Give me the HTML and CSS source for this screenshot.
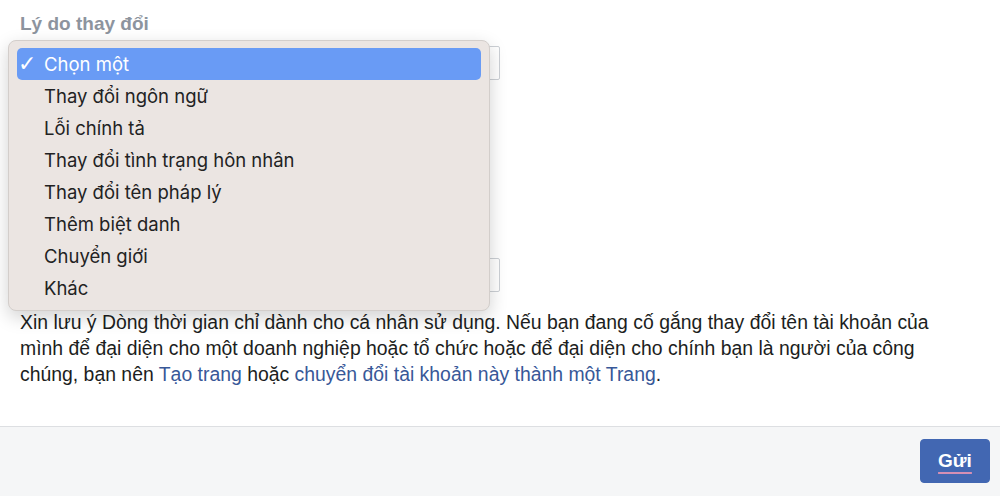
FILE: index.html
```html
<!DOCTYPE html>
<html lang="vi">
<head>
    <meta charset="UTF-8">
    <meta name="viewport" content="width=device-width, initial-scale=1.0">
    <title>Lý do thay đổi</title>
    <link rel="stylesheet" href="styles.css">
</head>
<body>
    <div class="page">
        <div class="content">
            <div class="field-label">Lý do thay đổi</div>
            <div class="select-box">
                <span class="select-text">Chọn một</span>
                <span class="select-arrow">⌄</span>
            </div>

            <div class="hidden-fields"></div>

            <div class="text-input"></div>

            <p class="note">
                Xin lưu ý Dòng thời gian chỉ dành cho cá nhân sử dụng. Nếu bạn đang cố gắng thay đổi tên tài khoản của
                mình để đại diện cho một doanh nghiệp hoặc tổ chức hoặc để đại diện cho chính bạn là người của công
                chúng, bạn nên <a href="#">Tạo trang</a> hoặc <a href="#">chuyển đổi tài khoản này thành một Trang</a>.
            </p>

            <!-- native select popup, drawn open -->
            <ul class="select-menu">
                <li class="menu-item selected"><span class="check">✓</span>Chọn một</li>
                <li class="menu-item">Thay đổi ngôn ngữ</li>
                <li class="menu-item">Lỗi chính tả</li>
                <li class="menu-item">Thay đổi tình trạng hôn nhân</li>
                <li class="menu-item">Thay đổi tên pháp lý</li>
                <li class="menu-item">Thêm biệt danh</li>
                <li class="menu-item">Chuyển giới</li>
                <li class="menu-item">Khác</li>
            </ul>
        </div>

        <div class="footer">
            <button class="submit-btn"><span>Gửi</span></button>
        </div>
    </div>
</body>
</html>
```

FILE: styles.css
```css
* {
    margin: 0;
    padding: 0;
    box-sizing: border-box;
}

body {
    font-family: 'Liberation Sans', Arial, sans-serif;
    background: #fff;
    color: #1c1e21;
    width: 1000px;
    height: 496px;
    overflow: hidden;
}

.page {
    display: flex;
    flex-direction: column;
    height: 496px;
}

.content {
    position: relative;
    flex: 1;
    padding: 12px 20px 0;
}

.field-label {
    font-size: 19px;
    font-weight: bold;
    color: #8d949e;
    line-height: 24px;
}

.select-box {
    display: flex;
    align-items: center;
    justify-content: space-between;
    width: 480px;
    height: 34px;
    margin-top: 10px;
    padding: 0 8px;
    border: 1px solid #ccd0d5;
    border-radius: 2px;
    font-size: 14px;
}

.select-arrow {
    color: #606770;
    font-size: 12px;
}

.hidden-fields {
    height: 178px;
}

.text-input {
    width: 480px;
    height: 34px;
    border: 1px solid #ccd0d5;
    border-radius: 2px;
}

.note {
    margin-top: 17px;
    font-size: 19.4px;
    line-height: 26px;
    color: #1c1e21;
    width: 945px;
}

.note a {
    color: #385898;
    text-decoration: none;
}

.select-menu {
    position: absolute;
    left: 8px;
    top: 40px;
    width: 482px;
    height: 271px;
    list-style: none;
    padding: 7px 8px 8px;
    background: #ebe5e2;
    border: 1px solid #d3cecb;
    border-radius: 8px;
    box-shadow: 0 6px 18px rgba(0, 0, 0, 0.18);
    font-family: Inter, 'Noto Sans', sans-serif;
}

.menu-item {
    position: relative;
    height: 32px;
    line-height: 32px;
    padding-left: 27px;
    font-size: 18.5px;
    color: #222;
    border-radius: 5px;
}

.menu-item.selected {
    background: #699bf5;
    color: #fff;
}

.check {
    position: absolute;
    left: 1px;
    top: 0;
    font-family: 'DejaVu Sans', sans-serif;
    font-size: 22px;
}

.footer {
    height: 70px;
    background: #f5f6f7;
    border-top: 1px solid #dddfe2;
    display: flex;
    justify-content: flex-end;
    align-items: center;
    padding: 0 10px 2px;
}

.submit-btn {
    width: 70px;
    height: 44px;
    background: #4267b2;
    border: 1px solid #4267b2;
    border-radius: 4px;
    color: #fff;
    font-family: 'Liberation Sans', Arial, sans-serif;
    font-size: 19px;
    font-weight: bold;
}

.submit-btn span {
    text-decoration: underline;
    text-decoration-color: #d48fb4;
    text-underline-offset: 5px;
    text-decoration-thickness: 2px;
}
```
